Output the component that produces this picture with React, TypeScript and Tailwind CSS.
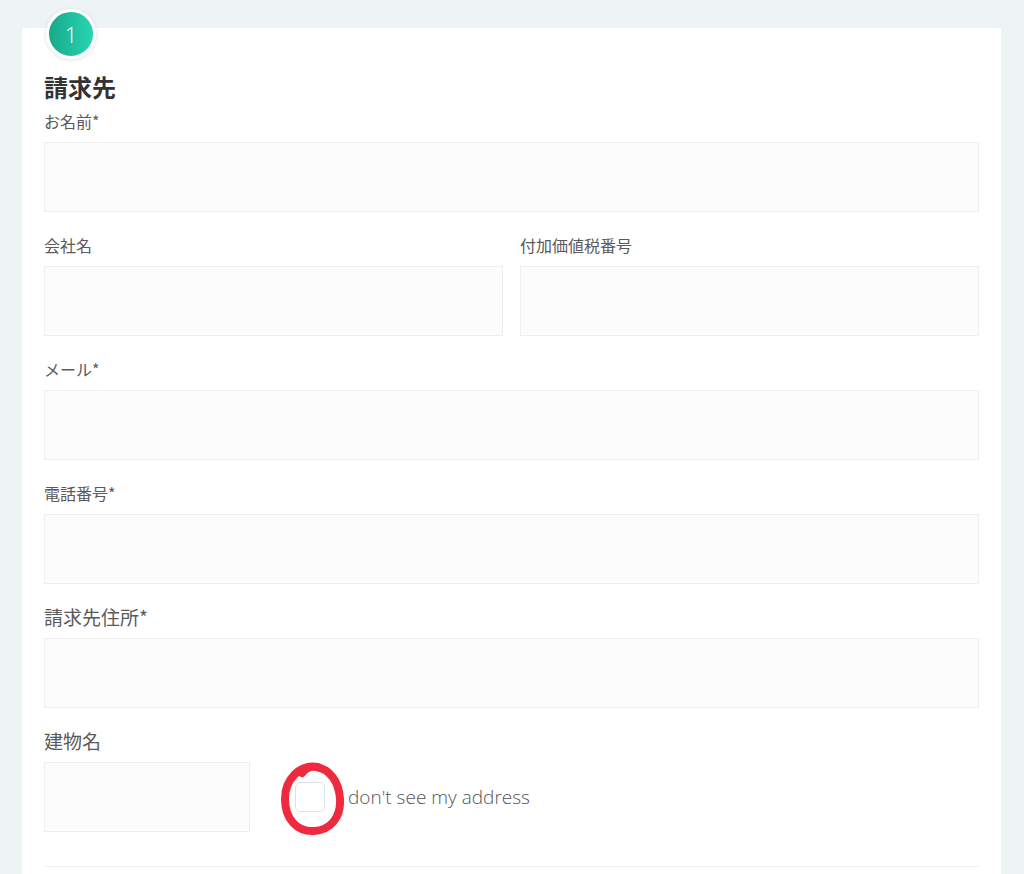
import React from "react";

const jp = "font-['Noto_Sans_CJK_JP','Noto_Sans',sans-serif]";

function Field({ label, big = false, className = "" }: { label: string; big?: boolean; className?: string }) {
  return (
    <div className={`flex flex-col ${className}`}>
      <label className={`${jp} ${big ? "text-[19px]" : "text-[16px]"} leading-[24px] text-[#5a5a5a] mb-[9px]`}>{label}</label>
      <div className="h-[70px] bg-[#fcfcfc] border border-[#efefef]" />
    </div>
  );
}

export default function App() {
  return (
    <div className="min-h-[874px] bg-[#eef3f3] pt-[28px] pl-[22px] pr-[23px] overflow-hidden">
      <div className="relative bg-white w-[979px] min-h-[846px] pt-[43px] px-[22px]">
        <div className="absolute left-[24px] top-[-19px] w-[50px] h-[50px] rounded-full border-[3px] border-white shadow-[0_1px_4px_rgba(0,0,0,0.12)] bg-gradient-to-r from-[#17a98a] to-[#27d6b2] flex items-center justify-center">
          <span className="font-['Open_Sans',sans-serif] text-white text-[22px] font-light leading-none">1</span>
        </div>
        <h2 className={`${jp} text-[24px] leading-[32px] font-bold text-[#333] mb-[6px]`}>請求先</h2>
        <Field label="お名前*" className="mb-[21px]" />
        <div className="grid grid-cols-2 gap-x-[17px] mb-[21px]">
          <Field label="会社名" />
          <Field label="付加価値税番号" />
        </div>
        <Field label="メール*" className="mb-[21px]" />
        <Field label="電話番号*" className="mb-[21px]" />
        <Field label="請求先住所*" big className="mb-[21px]" />
        <div className="flex flex-col">
          <label className={`${jp} text-[19px] leading-[24px] text-[#5a5a5a] mb-[9px]`}>建物名</label>
          <div className="flex items-center">
            <div className="w-[206px] h-[70px] bg-[#fcfcfc] border border-[#efefef]" />
            <div className="relative ml-[45px] w-[30px] h-[30px] rounded-[5px] border border-[#dbe3ea] bg-white">
              <svg className="absolute left-[-18px] top-[-22px] w-[70px] h-[76px] overflow-visible" viewBox="0 0 70 76" fill="none">
                <path
                  d="M40 6 C22 3, 7 18, 7 38 C7 58, 19 71, 36 70 C53 69, 63 56, 62 38 C61 21, 52 8, 38 6 C32 5, 27 8, 24 12"
                  stroke="#f02a3e"
                  strokeWidth="8"
                  strokeLinecap="round"
                  strokeLinejoin="round"
                />
              </svg>
            </div>
            <span className="ml-[23px] font-['Open_Sans',sans-serif] font-light text-[19px] text-[#555]">don't see my address</span>
          </div>
        </div>
        <div className="mt-[34px] border-t border-[#efefef]" />
      </div>
    </div>
  );
}
